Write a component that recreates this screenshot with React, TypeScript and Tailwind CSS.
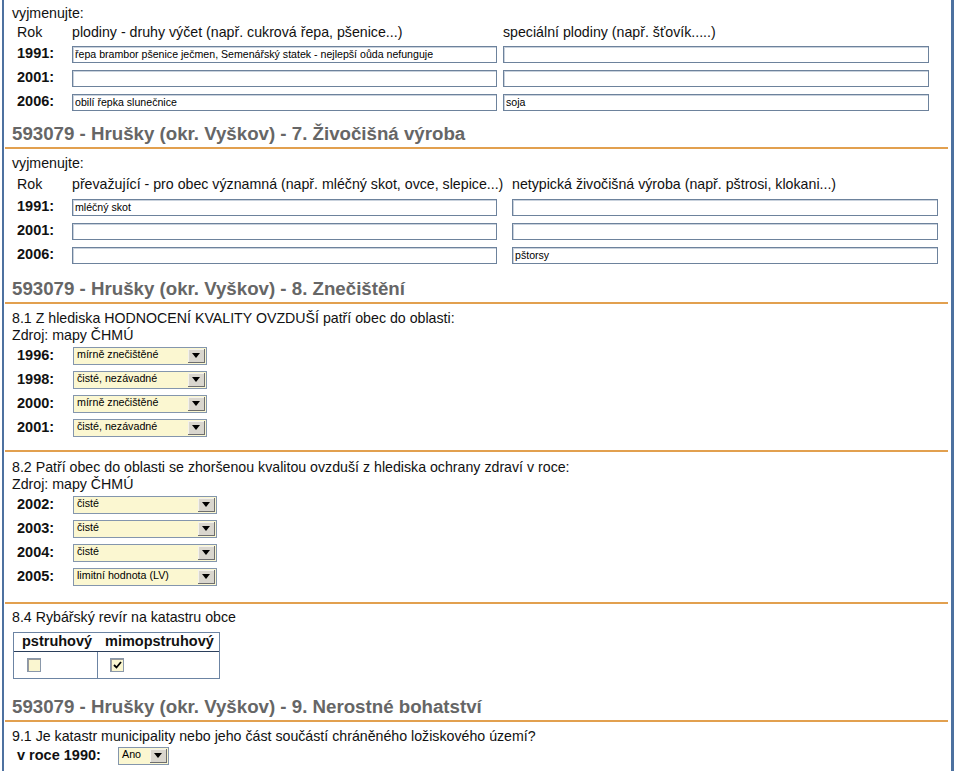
import React from 'react';

const Field: React.FC<{ value?: string; w: string }> = ({ value = '', w }) => (
  <input
    readOnly
    value={value}
    className={`${w} h-[17px] border border-[#6d829c] bg-white px-[2px] text-[10.6px] leading-[15px] text-black shadow-[inset_1px_1px_0_#c9d2dd] outline-none`}
  />
);

const Select: React.FC<{ value: string; w: string }> = ({ value, w }) => (
  <div className={`${w} flex h-[18px] border border-[#8496ad] bg-[#fbf7d1]`}>
    <span className="flex-1 pl-[3px] text-[10.7px] leading-[13px] text-black">{value}</span>
    <span className="m-[1px] flex w-[17px] items-center justify-center border-b border-r border-b-[#6e6e6e] border-r-[#6e6e6e] bg-[#d9d6ce] shadow-[inset_1px_1px_0_#f4f2ec]">
      <svg width="8" height="5" viewBox="0 0 8 5">
        <path d="M0 0h8L4 5z" fill="#000" />
      </svg>
    </span>
  </div>
);

const Heading: React.FC<{ text: string; className?: string }> = ({ text, className = '' }) => (
  <div className={className}>
    <h2 className="pl-[8px] text-[18.7px] font-bold leading-[20px] text-[#666666]">{text}</h2>
    <div className="ml-[1px] mr-[3px] mt-[3px] h-[2px] bg-[#e2a04f]" />
  </div>
);

const Rule: React.FC<{ className?: string }> = ({ className = '' }) => (
  <div className={`ml-[1px] mr-[3px] h-[2px] bg-[#e2a04f] ${className}`} />
);

const YearLabel: React.FC<{ children: React.ReactNode; w?: string }> = ({ children, w = 'w-[55px]' }) => (
  <span className={`${w} shrink-0 text-[14.5px] font-bold`}>{children}</span>
);

const Checkbox: React.FC<{ checked?: boolean }> = ({ checked }) => (
  <span className="flex h-[14px] w-[14px] items-center justify-center border border-[#8a98aa] bg-[#faf6d0] shadow-[inset_1px_1px_0_#9a9a9a]">
    {checked && (
      <svg width="9" height="8" viewBox="0 0 9 8">
        <path d="M1 4l2.5 2.5L8 1" stroke="#000" strokeWidth="1.8" fill="none" />
      </svg>
    )}
  </span>
);

const App: React.FC = () => {
  const plodiny = [
    { y: '1991:', a: 'řepa brambor pšenice ječmen, Semenářský statek - nejlepší oůda nefunguje', b: '' },
    { y: '2001:', a: '', b: '' },
    { y: '2006:', a: 'obilí řepka slunečnice', b: 'soja' },
  ];
  const zvirata = [
    { y: '1991:', a: 'mléčný skot', b: '' },
    { y: '2001:', a: '', b: '' },
    { y: '2006:', a: '', b: 'pštorsy' },
  ];
  const ovzdusi = [
    { y: '1996:', v: 'mírně znečištěné' },
    { y: '1998:', v: 'čisté, nezávadné' },
    { y: '2000:', v: 'mírně znečištěné' },
    { y: '2001:', v: 'čisté, nezávadné' },
  ];
  const zdravi = [
    { y: '2002:', v: 'čisté' },
    { y: '2003:', v: 'čisté' },
    { y: '2004:', v: 'čisté' },
    { y: '2005:', v: 'limitní hodnota (LV)' },
  ];

  return (
    <div className="min-h-[771px] w-[954px] bg-white pl-[2px] font-['Liberation_Sans',Arial,sans-serif] text-[14.2px] text-[#111]">
      <div className="min-h-[771px] border-l-2 border-r-[3px] border-[#4d71a0]">
        {/* 6. plodiny */}
        <p className="pl-[8px] pt-[4px] leading-[18px]">vyjmenujte:</p>
        <div className="mt-[2px] flex h-[18px] items-center whitespace-nowrap pl-[13px]">
          <span className="w-[55px]">Rok</span>
          <span className="w-[431px]">plodiny - druhy výčet (např. cukrová řepa, pšenice...)</span>
          <span>speciální plodiny (např. šťovík.....)</span>
        </div>
        {plodiny.map((r) => (
          <div key={r.y} className="flex h-[24px] items-center pl-[13px]">
            <YearLabel>{r.y}</YearLabel>
            <Field value={r.a} w="w-[425px]" />
            <span className="w-[6px]" />
            <Field value={r.b} w="w-[426px]" />
          </div>
        ))}

        {/* 7. Živočišná výroba */}
        <Heading className="mt-[10px]" text="593079 - Hrušky (okr. Vyškov) - 7. Živočišná výroba" />
        <p className="pl-[8px] pt-[5px] leading-[18px]">vyjmenujte:</p>
        <div className="mt-[4px] flex h-[18px] items-center whitespace-nowrap pl-[13px]">
          <span className="w-[440px]">
            <span className="inline-block w-[55px]">Rok</span>převažující - pro obec významná (např. mléčný skot, ovce, slepice...)
          </span>
          <span className="ml-[55px]">netypická živočišná výroba (např. pštrosi, klokani...)</span>
        </div>
        <div className="mt-[1px]">
          {zvirata.map((r) => (
            <div key={r.y} className="flex h-[24px] items-center pl-[13px]">
              <YearLabel>{r.y}</YearLabel>
              <Field value={r.a} w="w-[425px]" />
              <span className="w-[15px]" />
              <Field value={r.b} w="w-[426px]" />
            </div>
          ))}
        </div>

        {/* 8. Znečištění */}
        <Heading className="mt-[12px]" text="593079 - Hrušky (okr. Vyškov) - 8. Znečištění" />
        <div className="pl-[8px] pt-[6px] leading-[17px]">
          <p>8.1 Z hlediska HODNOCENÍ KVALITY OVZDUŠÍ patří obec do oblasti:</p>
          <p>Zdroj: mapy ČHMÚ</p>
        </div>
        {ovzdusi.map((r) => (
          <div key={r.y} className="flex h-[24px] items-center pl-[13px]">
            <YearLabel w="w-[56px]">{r.y}</YearLabel>
            <Select value={r.v} w="w-[134px]" />
          </div>
        ))}
        <Rule className="mt-[10px]" />

        <div className="pl-[8px] pt-[7px] leading-[17px]">
          <p>8.2 Patří obec do oblasti se zhoršenou kvalitou ovzduší z hlediska ochrany zdraví v roce:</p>
          <p>Zdroj: mapy ČHMÚ</p>
        </div>
        {zdravi.map((r) => (
          <div key={r.y} className="flex h-[24px] items-center pl-[13px]">
            <YearLabel w="w-[56px]">{r.y}</YearLabel>
            <Select value={r.v} w="w-[144px]" />
          </div>
        ))}
        <Rule className="mt-[13px]" />

        <p className="pl-[8px] pt-[5px] leading-[17px]">8.4 Rybářský revír na katastru obce</p>
        <div className="ml-[9px] mt-[6px] w-[207px] border border-[#6c84a3]">
          <div className="flex h-[19px] items-center border-b border-[#2b3f5c] text-[14.5px] font-bold">
            <span className="w-[84px] pl-[8px]">pstruhový</span>
            <span className="pl-[7px]">mimopstruhový</span>
          </div>
          <div className="flex h-[26px]">
            <span className="flex w-[84px] items-center border-r border-[#6c84a3] pl-[13px]">
              <Checkbox />
            </span>
            <span className="flex items-center pl-[12px]">
              <Checkbox checked />
            </span>
          </div>
        </div>

        {/* 9. Nerostné bohatství */}
        <Heading className="mt-[18px]" text="593079 - Hrušky (okr. Vyškov) - 9. Nerostné bohatství" />
        <p className="pl-[8px] pt-[6px] leading-[17px]">
          9.1 Je katastr municipality nebo jeho část součástí chráněného ložiskového území?
        </p>
        <div className="flex h-[22px] items-center pl-[13px]">
          <span className="w-[101px] text-[14.5px] font-bold">v roce 1990:</span>
          <Select value="Ano" w="w-[51px]" />
        </div>
      </div>
    </div>
  );
};

export default App;
